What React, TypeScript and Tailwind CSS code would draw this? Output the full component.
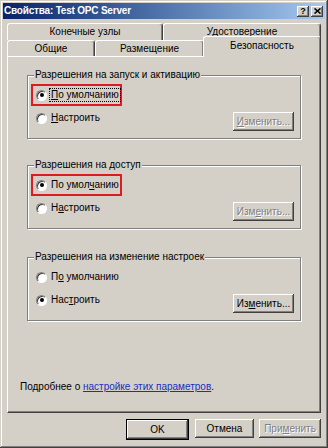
import React from "react";

const raised =
  "shadow-[inset_-1px_-1px_0_#404040,inset_1px_1px_0_#ffffff,inset_-2px_-2px_0_#808080,inset_2px_2px_0_#d4d0c8]";

function Radio({ checked }: { checked?: boolean }) {
  return (
    <span className="w-[11px] h-[11px] shrink-0 rounded-full bg-white border border-[#808080] border-b-white border-r-white shadow-[inset_1px_1px_0_#404040] flex items-center justify-center">
      {checked && <span className="w-[4px] h-[4px] rounded-full bg-black" />}
    </span>
  );
}

function Btn({
  children,
  disabled,
  className = "",
}: {
  children: React.ReactNode;
  disabled?: boolean;
  className?: string;
}) {
  return (
    <div
      className={`h-[19px] flex items-center justify-center bg-[#d4d0c8] ${raised} ${
        disabled ? "text-[#808080] [text-shadow:1px_1px_0_#ffffff]" : "text-black"
      } ${className}`}
    >
      {children}
    </div>
  );
}

function U({ children }: { children: React.ReactNode }) {
  return <span className="underline underline-offset-[1px]">{children}</span>;
}

function Group({
  title,
  className,
  row1,
  row2,
  red,
  firstChecked,
  button,
  buttonDisabled,
  focus,
}: {
  title: string;
  className: string;
  row1: React.ReactNode;
  row2: React.ReactNode;
  red?: boolean;
  firstChecked?: boolean;
  button: React.ReactNode;
  buttonDisabled?: boolean;
  focus?: boolean;
}) {
  return (
    <div
      className={`mx-[19px] border border-[#808080] shadow-[1px_1px_0_#ffffff,inset_1px_1px_0_#ffffff] ${className}`}
    >
      <div className="-mt-[7px] ml-[6px] w-fit px-[1px] leading-[12px] bg-[#d4d0c8]">
        {title}
      </div>
      <div className="pl-[8px] pr-[6px] pb-[7px]">
        <div
          className={`mt-[3px] h-[22px] w-[91px] -ml-[5px] pl-[3px] flex items-center gap-[4px] border-2 ${
            red ? "border-[#dc1c24]" : "border-transparent"
          }`}
        >
          <Radio checked={firstChecked} />
          <span
            className={`leading-[12px] ${
              focus ? "outline outline-1 outline-dotted outline-black px-[1px] -ml-[1px]" : ""
            }`}
          >
            {row1}
          </span>
        </div>
        <div className="mt-[6px] flex justify-between items-start">
          <div className="h-[12px] flex items-center gap-[4px]">
            <Radio checked={!firstChecked} />
            <span className="leading-[12px]">{row2}</span>
          </div>
          <Btn disabled={buttonDisabled} className="w-[61px]">
            {button}
          </Btn>
        </div>
      </div>
    </div>
  );
}

export default function App() {
  const tab =
    "flex items-center justify-center bg-[#d4d0c8] border-t border-l border-r border-white border-r-[#404040] rounded-tl-[3px] rounded-tr-[3px] shadow-[inset_-1px_0_0_#808080]";
  return (
    <div className="w-[328px] h-[448px] bg-[#d4d0c8] p-[3px] flex flex-col text-[10px] text-black font-['Liberation_Sans',Arial,sans-serif] shadow-[inset_-1px_-1px_0_#404040,inset_1px_1px_0_#d4d0c8,inset_-2px_-2px_0_#808080,inset_2px_2px_0_#ffffff]">
      {/* Title bar */}
      <div className="h-[16px] shrink-0 flex items-center pl-[1px] pr-[2px] bg-gradient-to-r from-[#0a246a] to-[#a6caf0]">
        <span className="text-white font-bold text-[10px] leading-[12px] tracking-[-0.2px]">
          Свойства: Test OPC Server
        </span>
        <div className="ml-auto flex gap-[2px]">
          <div
            className={`w-[12px] h-[11px] bg-[#d4d0c8] ${raised} flex items-center justify-center text-[9px] font-bold leading-none`}
          >
            ?
          </div>
          <div
            className={`w-[12px] h-[11px] bg-[#d4d0c8] ${raised} flex items-center justify-center`}
          >
            <svg width="7" height="6" viewBox="0 0 7 6">
              <path d="M0.5 0.5 L6.5 5.5 M6.5 0.5 L0.5 5.5" stroke="#000" strokeWidth="1.6" />
            </svg>
          </div>
        </div>
      </div>

      <div className="flex-1 flex flex-col px-[4px] pt-[4px]">
        {/* Tabs back row */}
        <div className="flex h-[17px] shrink-0">
          <div className={`${tab} w-[156px] pb-[1px]`}>Конечные узлы</div>
          <div className={`${tab} flex-1 pb-[1px]`}>Удостоверение</div>
        </div>
        {/* Tabs front row */}
        <div className="flex h-[16px] shrink-0 items-end">
          <div className={`${tab} w-[88px] h-[16px]`}>Общие</div>
          <div className={`${tab} w-[109px] h-[16px]`}>Размещение</div>
          <div
            className={`${tab} relative z-10 flex-1 h-[21px] -mb-[1px] -ml-[1px] pb-[3px]`}
          >
            Безопасность
          </div>
        </div>

        {/* Panel */}
        <div className="h-[357px] shrink-0 flex flex-col border border-white border-r-[#404040] border-b-[#404040] shadow-[inset_-1px_-1px_0_#808080]">
          <Group
            className="mt-[18px]"
            title="Разрешения на запуск и активацию"
            red
            focus
            firstChecked
            row1={
              <>
                <U>П</U>о умолчанию
              </>
            }
            row2={
              <>
                <U>Н</U>астроить
              </>
            }
            buttonDisabled
            button={
              <>
                <U>И</U>зменить...
              </>
            }
          />
          <Group
            className="mt-[26px]"
            title="Разрешения на доступ"
            red
            firstChecked
            row1={
              <>
                По умол<U>ч</U>анию
              </>
            }
            row2={
              <>
                Н<U>а</U>строить
              </>
            }
            buttonDisabled
            button={
              <>
                Изм<U>е</U>нить...
              </>
            }
          />
          <Group
            className="mt-[28px]"
            title="Разрешения на изменение настроек"
            row1={
              <>
                П<U>о</U> умолчанию
              </>
            }
            row2={
              <>
                Нас<U>т</U>роить
              </>
            }
            button={
              <>
                Из<U>м</U>енить...
              </>
            }
          />
          <div className="mt-[60px] ml-[12px] leading-[12px]">
            Подробнее о{" "}
            <span className="text-[#1a2fc0] underline underline-offset-[1px]">
              настройке этих параметров
            </span>
            .
          </div>
        </div>

        {/* Bottom buttons */}
        <div className="mt-[6px] flex justify-end">
          <div className="border border-black">
            <Btn className="w-[61px] h-[17px]">OK</Btn>
          </div>
          <Btn className="w-[59px] ml-[6px]">Отмена</Btn>
          <Btn disabled className="w-[62px] ml-[5px]">
            При<U>м</U>енить
          </Btn>
        </div>
      </div>
    </div>
  );
}
